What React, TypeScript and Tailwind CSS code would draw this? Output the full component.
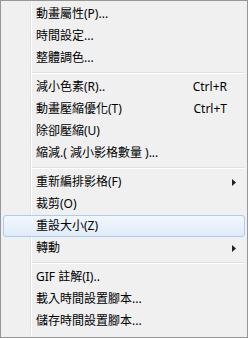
import type { ReactNode } from "react";

type Entry =
  | { kind: "item"; label: string; shortcut?: string; submenu?: boolean; active?: boolean }
  | { kind: "sep" };

const ENTRIES: Entry[] = [
  { kind: "item", label: "動畫屬性(P)..." },
  { kind: "item", label: "時間設定..." },
  { kind: "item", label: "整體調色..." },
  { kind: "sep" },
  { kind: "item", label: "減小色素(R)..", shortcut: "Ctrl+R" },
  { kind: "item", label: "動畫壓縮優化(T)", shortcut: "Ctrl+T" },
  { kind: "item", label: "除卻壓縮(U)" },
  { kind: "item", label: "縮減.( 減小影格數量 )..." },
  { kind: "sep" },
  { kind: "item", label: "重新編排影格(F)", submenu: true },
  { kind: "item", label: "裁剪(O)" },
  { kind: "item", label: "重設大小(Z)", active: true },
  { kind: "item", label: "轉動", submenu: true },
  { kind: "sep" },
  { kind: "item", label: "GIF 註解(I).." },
  { kind: "item", label: "載入時間設置腳本..." },
  { kind: "item", label: "儲存時間設置腳本..." },
];

function Arrow() {
  return (
    <svg width="4" height="7" viewBox="0 0 4 7" className="absolute right-[8px] top-[7px]">
      <path d="M0 0 L4 3.5 L0 7 Z" fill="#222" />
    </svg>
  );
}

function Row({ children, active }: { children: ReactNode; active?: boolean }) {
  return (
    <div
      className={
        "relative z-10 flex h-[22px] items-center pl-[32px] pr-[17px] " +
        (active
          ? "rounded-[3px] border border-[#aacdf3] bg-gradient-to-b from-[#f2f7fd] to-[#e1ebf7]"
          : "border border-transparent")
      }
    >
      {children}
    </div>
  );
}

export default function App() {
  return (
    <div
      className="relative h-[338px] w-[248px] border border-[#979797] bg-[#f0f0f0] p-[2px] text-[12px] text-black"
      style={{ fontFamily: '"Noto Sans", "Noto Sans CJK TC", sans-serif' }}
    >
      <div className="absolute bottom-[2px] left-[29px] top-[2px] w-[2px] border-l border-r border-l-[#e2e3e3] border-r-white" />
      {ENTRIES.map((e, i) =>
        e.kind === "sep" ? (
          <div key={i} className="h-[7px] pt-[3px] pl-[28px]">
            <div className="border-t border-b border-t-[#e0e0e0] border-b-white" />
          </div>
        ) : (
          <Row key={i} active={e.active}>
            <span className="flex-1 whitespace-nowrap leading-[20px]">{e.label}</span>
            {e.shortcut && <span className="leading-[20px]">{e.shortcut}</span>}
            {e.submenu && <Arrow />}
          </Row>
        )
      )}
    </div>
  );
}
